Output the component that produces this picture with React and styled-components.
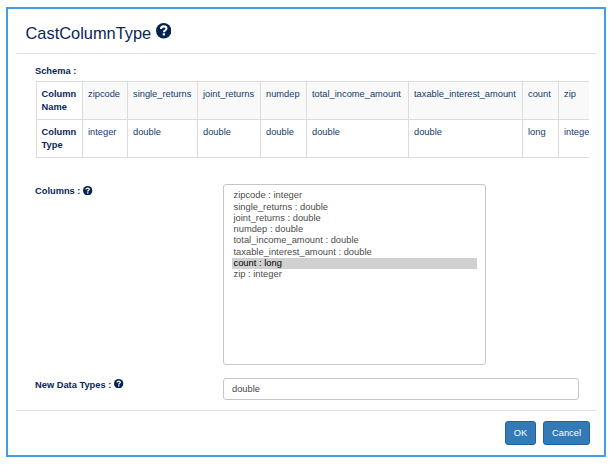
import React from "react";
import styled, { createGlobalStyle } from "styled-components";

const navy = "#0a2757";
const line = "#dcdcdc";

const GlobalStyle = createGlobalStyle`
  * { box-sizing: border-box; }
  body {
    margin: 0;
    background: #fff;
    color: ${navy};
    font-family: "Liberation Sans", Arial, sans-serif;
    font-size: 9.3px;
  }
`;

const Dialog = styled.div`
  display: flex;
  flex-direction: column;
  width: 600px;
  height: 450px;
  margin: 7px 0 0 6px;
  padding: 0 8px;
  border: 2px solid #419ce9;
`;

const Header = styled.header`
  display: flex;
  align-items: center;
  height: 45px;
  padding: 3px 0 0 9.5px;
  border-bottom: 1px solid #e3e3e3;
`;

const Title = styled.h1`
  margin: 0 4.5px 0 0;
  font-size: 16.4px;
  line-height: 20px;
  font-weight: 400;
`;

const Body = styled.main`
  height: 357px;
  padding: 11px 6px 0 19px;
  border-bottom: 1px solid #e3e3e3;
`;

const Label = styled.label`
  display: flex;
  align-items: center;
  gap: 3px;
  height: 12px;
  font-weight: 700;
  white-space: pre;
`;

const TableClip = styled.div`
  width: 554px;
  margin-top: 4px;
  overflow: hidden;
`;

const Table = styled.table`
  width: 571px;
  table-layout: fixed;
  border-collapse: separate;
  border-spacing: 0;
  border-top: 1px solid ${line};
  border-left: 1px solid ${line};
  margin-left: 1px;
`;

const Col = styled.col`
  width: ${(p) => p.$w}px;
`;

const Row = styled.tr`
  height: 38px;
  background: ${(p) => (p.$striped ? "#f9f9f9" : "#fff")};
`;

const Cell = styled.td`
  padding: 6px 0 0 5px;
  vertical-align: top;
  text-align: left;
  line-height: 13px;
  white-space: nowrap;
  color: #123a6b;
  border-right: 1px solid ${line};
  border-bottom: 1px solid ${line};
`;

const HeadCell = styled(Cell).attrs({ as: "th" })`
  padding-left: 4.6px;
  background: #fff;
  color: ${navy};
  white-space: normal;
`;

const Field = styled.div`
  display: grid;
  grid-template-columns: 188px 1fr;
  margin-top: ${(p) => p.$top}px;
`;

const LabelSlot = styled.div`
  padding-top: 1px;
`;

const ListBox = styled.ul`
  width: 263px;
  height: 181px;
  margin: 0;
  padding: 5.4px 8px;
  border: 1px solid #c6c6c6;
  border-radius: 3px;
  list-style: none;
  color: #4c4c4c;
  font-size: 9.35px;
`;

const Option = styled.li`
  height: 11.25px;
  padding-left: 1.5px;
  line-height: 11.25px;
  color: ${(p) => (p.$selected ? "#000" : "inherit")};
  background: ${(p) => (p.$selected ? "#d0d0d0" : "none")};
`;

const TextInput = styled.input`
  width: 356px;
  height: 22px;
  padding: 0 8px;
  border: 1px solid #c6c6c6;
  border-radius: 3px;
  background: #fff;
  color: #484848;
  font: 9.3px "Liberation Sans", Arial, sans-serif;
  outline: none;
`;

const Footer = styled.footer`
  display: flex;
  justify-content: flex-end;
  gap: 7px;
  padding: 10px 6px 0 0;
`;

const Button = styled.button`
  width: ${(p) => p.$w}px;
  height: 24px;
  padding: 0;
  border: 1px solid #1f62a1;
  border-radius: 3px;
  background: #337ab7;
  color: #fff;
  font: 9.3px "Liberation Sans", Arial, sans-serif;
`;

const Svg = styled.svg`
  display: block;
  flex: none;
  margin-top: ${(p) => p.$shift}px;
`;

function HelpIcon({ size, shift = 0 }) {
  return (
    <Svg width={size} height={size} viewBox="0 0 16 16" $shift={shift}>
      <circle cx="8" cy="8" r="8" fill="#04214f" />
      <path
        d="M5.2 6.2C5.2 4.3 6.3 3.5 8 3.5s2.9.8 2.9 2.3C10.9 7.6 8.2 7.5 8.2 9.7"
        fill="none"
        stroke="#fff"
        strokeWidth="2.1"
      />
      <rect x="7" y="10.7" width="2.3" height="2.2" fill="#fff" />
    </Svg>
  );
}

const schema = [
  ["zipcode", "integer", 45],
  ["single_returns", "double", 70],
  ["joint_returns", "double", 63],
  ["numdep", "double", 46],
  ["total_income_amount", "double", 102],
  ["taxable_interest_amount", "double", 114],
  ["count", "long", 36],
  ["zip", "integer", 48],
];

export default function App() {
  return (
    <>
      <GlobalStyle />
      <Dialog>
        <Header>
          <Title>CastColumnType</Title>
          <HelpIcon size={15.4} shift={-3} />
        </Header>
        <Body>
          <Label>Schema :</Label>
          <TableClip>
            <Table>
              <colgroup>
                <Col $w={46} />
                {schema.map(([name, , w]) => (
                  <Col key={name} $w={w} />
                ))}
              </colgroup>
              <tbody>
                <Row $striped>
                  <HeadCell>Column Name</HeadCell>
                  {schema.map(([name]) => (
                    <Cell key={name}>{name}</Cell>
                  ))}
                </Row>
                <Row>
                  <HeadCell>Column Type</HeadCell>
                  {schema.map(([name, type]) => (
                    <Cell key={name}>{type}</Cell>
                  ))}
                </Row>
              </tbody>
            </Table>
          </TableClip>
          <Field $top={26}>
            <LabelSlot>
              <Label>
                Columns :<HelpIcon size={9.3} shift={-1} />
              </Label>
            </LabelSlot>
            <ListBox>
              {schema.map(([name, type]) => (
                <Option key={name} $selected={name === "count"}>
                  {name} : {type}
                </Option>
              ))}
            </ListBox>
          </Field>
          <Field $top={13}>
            <LabelSlot>
              <Label>
                New Data Types :<HelpIcon size={9.3} shift={-3} />
              </Label>
            </LabelSlot>
            <TextInput defaultValue="double" />
          </Field>
        </Body>
        <Footer>
          <Button $w={31}>OK</Button>
          <Button $w={47}>Cancel</Button>
        </Footer>
      </Dialog>
    </>
  );
}
